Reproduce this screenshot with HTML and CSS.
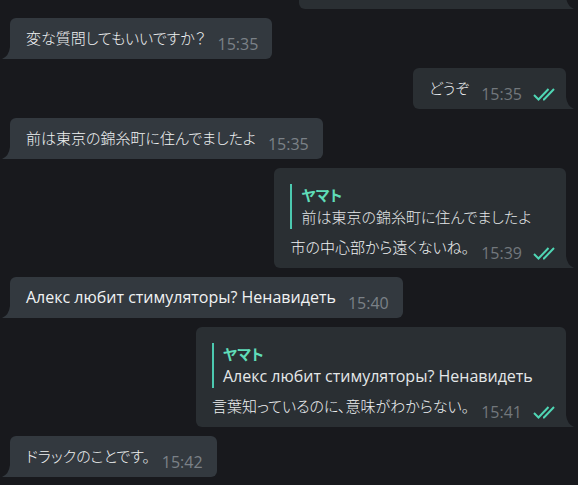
FILE: index.html
```html
<!DOCTYPE html>
<html lang="ja">
<head>
<meta charset="utf-8">
<meta name="viewport" content="width=device-width, initial-scale=1">
<title>ヤマト</title>
<link rel="stylesheet" href="styles.css">
</head>
<body>
<svg class="defs" aria-hidden="true">
  <symbol id="read" viewBox="0 0 22 14"><path d="M1 8L5.5 12.5L15.5 2M10 12.5L11 12.5L21 2"/></symbol>
  <symbol id="tail" viewBox="0 0 8 12"><path d="M8 0V12H0Q7 9 8 0Z"/></symbol>
</svg>
<main class="chat">
  <article class="bubble out previous"><svg class="tail" aria-hidden="true"><use href="#tail"/></svg></article>
  <article class="bubble in">
    <div class="line"><p class="text">変な質問してもいいですか？</p><time>15:35</time></div>
    <svg class="tail" aria-hidden="true"><use href="#tail"/></svg>
  </article>
  <article class="bubble out">
    <div class="line"><p class="text">どうぞ</p><time>15:35</time><svg class="read" aria-hidden="true"><use href="#read"/></svg></div>
    <svg class="tail" aria-hidden="true"><use href="#tail"/></svg>
  </article>
  <article class="bubble in">
    <div class="line"><p class="text">前は東京の錦糸町に住んでましたよ</p><time>15:35</time></div>
    <svg class="tail" aria-hidden="true"><use href="#tail"/></svg>
  </article>
  <article class="bubble out">
    <blockquote class="quote"><strong class="name">ヤマト</strong><p>前は東京の錦糸町に住んでましたよ</p></blockquote>
    <div class="line"><p class="text">市の中心部から遠くないね。</p><time>15:39</time><svg class="read" aria-hidden="true"><use href="#read"/></svg></div>
    <svg class="tail" aria-hidden="true"><use href="#tail"/></svg>
  </article>
  <article class="bubble in">
    <div class="line"><p class="text" lang="ru">Алекс любит стимуляторы? Ненавидеть</p><time>15:40</time></div>
    <svg class="tail" aria-hidden="true"><use href="#tail"/></svg>
  </article>
  <article class="bubble out">
    <blockquote class="quote"><strong class="name">ヤマト</strong><p lang="ru">Алекс любит стимуляторы? Ненавидеть</p></blockquote>
    <div class="line"><p class="text">言葉知っているのに、意味がわからない。</p><time>15:41</time><svg class="read" aria-hidden="true"><use href="#read"/></svg></div>
    <svg class="tail" aria-hidden="true"><use href="#tail"/></svg>
  </article>
  <article class="bubble in">
    <div class="line"><p class="text">ドラックのことです。</p><time>15:42</time></div>
    <svg class="tail" aria-hidden="true"><use href="#tail"/></svg>
  </article>
</main>
</body>
</html>
```
FILE: styles.css
```css
* {
  box-sizing: border-box;
}

body {
  margin: 0;
  background: #18191d;
  color: #f0f2f3;
  font-family: "Noto Sans CJK JP", sans-serif;
  font-size: 15px;
  font-weight: 300;
  font-feature-settings: "palt";
}

p {
  margin: 0;
}

:lang(ru),
time {
  font-family: "Open Sans", sans-serif;
  font-size: 16px;
  font-weight: 400;
}

.defs {
  display: none;
}

.chat {
  display: flex;
  flex-direction: column;
  gap: 9px;
  padding: 0 12px 8px 10px;
}

.bubble {
  position: relative;
  max-width: 90%;
  padding: 8px 14px 2px 16px;
  border-radius: 6px;
}

.in {
  align-self: flex-start;
  background: #33393f;
  color: #33393f;
  border-bottom-left-radius: 0;
}

.out {
  align-self: flex-end;
  padding-right: 11px;
  background: #2a2f33;
  color: #2a2f33;
  border-bottom-right-radius: 0;
}

.previous {
  width: 48%;
  height: 9px;
  padding: 0;
  overflow-y: clip;
  border-top-left-radius: 0;
  border-top-right-radius: 0;
}

.tail {
  position: absolute;
  bottom: 0;
  left: -8px;
  width: 8px;
  height: 12px;
  fill: currentColor;
}

.out .tail {
  left: 100%;
  transform: scaleX(-1);
}

.line {
  display: flex;
  align-items: flex-end;
  min-height: 31px;
  line-height: 25px;
}

.text {
  align-self: flex-start;
  margin-right: 12px;
  color: #f0f2f3;
  line-height: 23px;
}

.text:lang(ru) {
  line-height: 25px;
}

time {
  margin-left: auto;
  color: #72777c;
}

.in time {
  color: #7b8187;
}

.read {
  width: 22px;
  height: 14px;
  margin: 0 0 6px 11px;
  fill: none;
  stroke: #4fd6b4;
  stroke-width: 2;
}

.quote {
  margin: 8px 0 6px;
  padding: 0 0 1px 9px;
  border-left: 2px solid #4cc9b0;
  color: #e4e7e8;
}

.quote p,
.name {
  display: block;
  line-height: 22px;
}

.name {
  color: #5fdcb8;
  font-weight: 700;
}
```
